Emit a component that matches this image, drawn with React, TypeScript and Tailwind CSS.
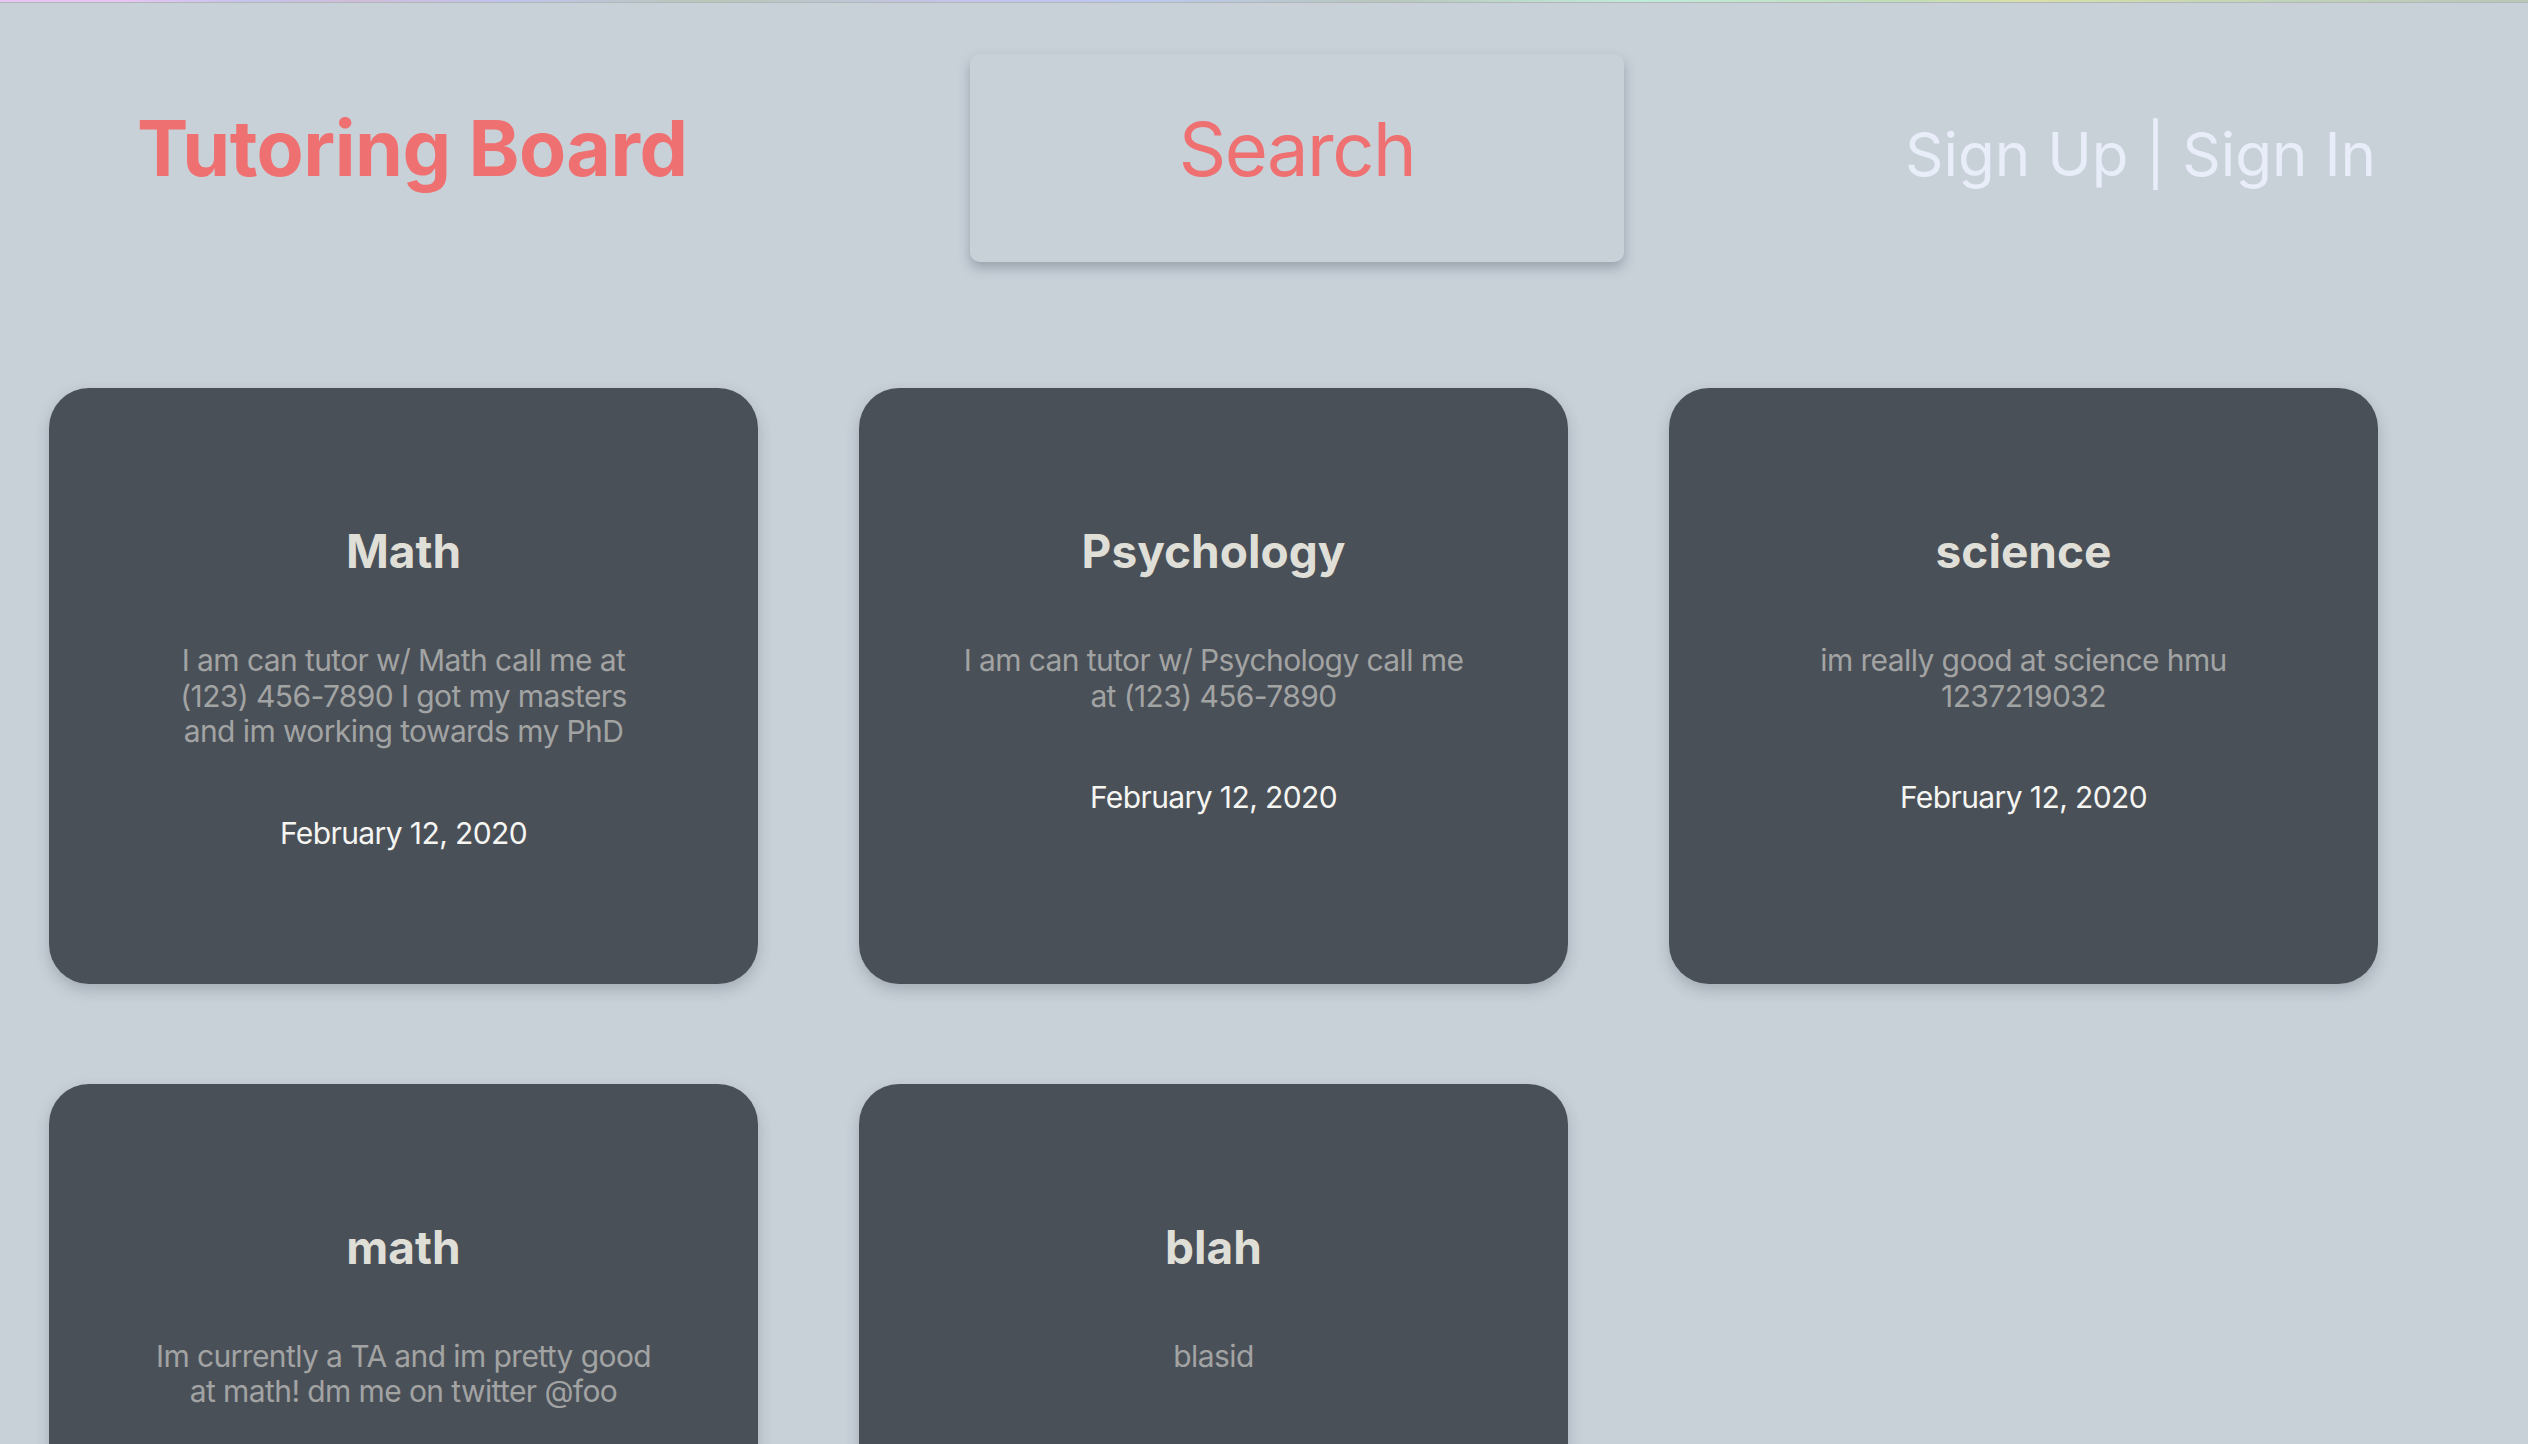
const posts = [
  {
    subject: "Math",
    body: "I am can tutor w/ Math call me at (123) 456-7890 I got my masters and im working towards my PhD",
    date: "February 12, 2020",
  },
  {
    subject: "Psychology",
    body: "I am can tutor w/ Psychology call me at (123) 456-7890",
    date: "February 12, 2020",
  },
  {
    subject: "science",
    body: "im really good at science hmu 1237219032",
    date: "February 12, 2020",
  },
  {
    subject: "math",
    body: "Im currently a TA and im pretty good at math! dm me on twitter @foo",
    date: "February 12, 2020",
  },
  {
    subject: "blah",
    body: "blasid",
    date: "February 12, 2020",
  },
];

function PostCard({ subject, body, date }: { subject: string; body: string; date: string }) {
  return (
    <div className="flex flex-col items-center rounded-[40px] bg-[#4a5058] px-[103px] pt-[135px] pb-[133px] text-center shadow-[0_6px_14px_rgba(60,70,80,0.25)]">
      <h2 className="text-[46px] leading-[56px] font-bold text-[#dfdfd8]">{subject}</h2>
      <p className="mt-[64px] text-[30px] leading-[35.5px] tracking-[-0.6px] text-[#a2a3a3]">{body}</p>
      <p className="mt-[65px] text-[30px] leading-[36px] tracking-[-0.6px] text-[#f5f5f2]">{date}</p>
    </div>
  );
}

export default function App() {
  return (
    <div className="min-h-screen bg-[#c8d0d8] font-['Inter','Noto_Sans',sans-serif]">
      <div className="h-[2px] bg-[linear-gradient(90deg,#e6c4f4_0%,#e6c4f4_5%,#c4c4ec_10%,#d0bcd8_14%,#c0c4ee_20%,#b8c8b8_28%,#c4c4ec_38%,#bcc8f0_45%,#b8c8bc_55%,#c0ecdc_65%,#c0dcb8_75%,#d8e0a8_80%,#c0d4b8_90%,#b8c8b8_100%)]" />
      <div className="h-px bg-[#b2b6b8]" />

      <header className="flex items-baseline pt-[51px]">
        <div className="w-[970px] pl-[137px]">
          <h1 className="text-[77px] leading-[80px] font-bold tracking-[-0.5px] text-[#ef7070]">Tutoring Board</h1>
        </div>
        <div className="w-[654px] rounded-[10px] bg-[#c8d0d8] pt-[57px] pb-[75px] text-center shadow-[0_6px_12px_rgba(70,80,95,0.35)]">
          <span className="text-[74px] leading-[76px] tracking-[-1.5px] text-[#ef7070]">Search</span>
        </div>
        <div className="flex-1 pr-[152px] text-right">
          <span className="text-[60px] leading-[64px] text-[#e8edf9]">Sign Up | Sign In</span>
        </div>
      </header>

      <main className="mt-[126px] grid grid-cols-[repeat(3,709px)] gap-x-[101px] gap-y-[100px] pl-[49px] pb-[100px]">
        {posts.map((p, i) => (
          <PostCard key={i} {...p} />
        ))}
      </main>
    </div>
  );
}
